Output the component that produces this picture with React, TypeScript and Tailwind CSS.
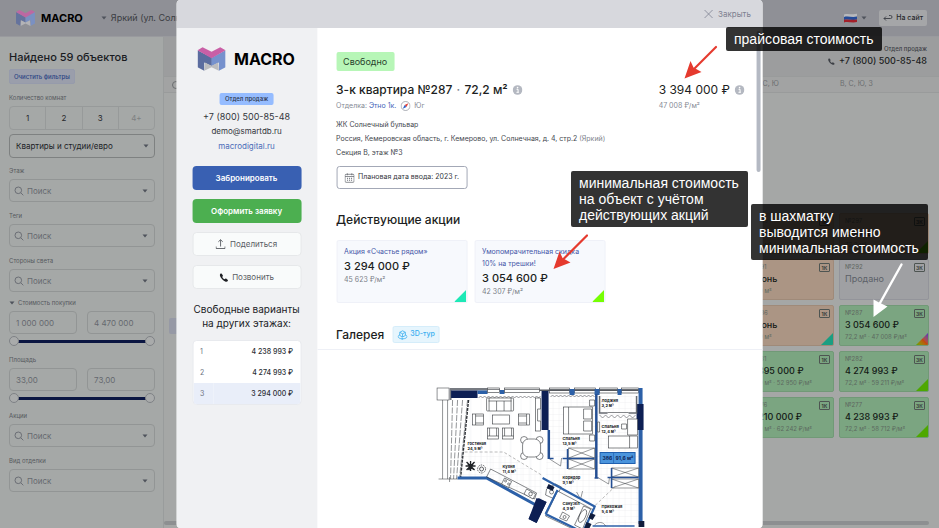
import React, { useState } from 'react';

interface Flat {
  number: string;
  rooms: string;
  price: string;
  details?: string;
  status: 'free' | 'booked' | 'sold';
  corner?: 'teal' | 'green' | 'rainbow';
}

const FLATS: Flat[] = [
  { number: '№296', rooms: '1К', price: 'Бронь', details: '38,9 м²', status: 'booked' },
  { number: '№297', rooms: '3К', price: 'Бронь', details: '72,2 м²', status: 'booked', corner: 'green' },
  { number: '№291', rooms: '1К', price: 'Бронь', details: '38,9 м²', status: 'booked' },
  { number: '№292', rooms: '3К', price: 'Продано', status: 'sold' },
  { number: '№286', rooms: '1К', price: 'Бронь', details: '38,9 м²', status: 'booked', corner: 'teal' },
  { number: '№287', rooms: '3К', price: '3 054 600 ₽', details: '72,2 м² · 47 008 ₽/м²', status: 'free', corner: 'rainbow' },
  { number: '№281', rooms: '1К', price: '3 395 000 ₽', details: '38,9 м² · 52 950 ₽/м²', status: 'free' },
  { number: '№282', rooms: '3К', price: '4 274 993 ₽', details: '72,2 м² · 59 211 ₽/м²', status: 'free', corner: 'green' },
  { number: '№276', rooms: '1К', price: '4 210 000 ₽', details: '38,9 м² · 62 242 ₽/м²', status: 'free' },
  { number: '№277', rooms: '3К', price: '4 238 993 ₽', details: '72,2 м² · 58 712 ₽/м²', status: 'free', corner: 'green' },
];

const FLOORS = [
  { floor: '1', price: '4 238 993 ₽' },
  { floor: '2', price: '4 274 993 ₽' },
  { floor: '3', price: '3 294 000 ₽' },
];

const STATUS_STYLES = {
  free: 'bg-[#7ba581] border-[#719977]',
  booked: 'bg-[#ab9584] border-[#9f8a79]',
  sold: 'bg-[#9fa0a3] border-[#93949a]',
};

const CORNER_STYLES = {
  teal: 'bg-[#1a9e82]',
  green: 'bg-[#4ea800]',
  rainbow: 'bg-linear-to-tr from-[#4ea800] via-[#c04a10] to-[#5a20c0]',
};

const Logo: React.FC<{ className: string; dim?: boolean }> = ({ className, dim }) => (
  <svg viewBox="0 0 84 71" className={className} opacity={dim ? 0.8 : 1} aria-hidden="true">
    <path d="M0 9 43 32V57L20 46V71L0 60Z" fill="#5b6c9f" />
    <path d="M84 9 42 32V57L64 46V71L84 60Z" fill="#7691cd" />
    <path d="M22 46 42 56 62 46 64 71 42 60 20 71Z" fill="#bcbcbf" />
    <path d="M15 0 42 14 68 0 84 9 42 33 0 9Z" fill="#c95fa6" />
  </svg>
);

const Caret: React.FC<{ className?: string }> = ({ className = '' }) => (
  <svg viewBox="0 0 6 4" className={`h-1 w-1.5 shrink-0 ${className}`} aria-hidden="true">
    <path d="M0.5 0.5h5L3 3.5Z" fill="#4f535c" />
  </svg>
);

const PhoneIcon: React.FC<{ className: string }> = ({ className }) => (
  <svg viewBox="0 0 16 16" className={className} fill="currentColor" aria-hidden="true">
    <path d="M1.2 1.8C2 1 3.3.7 4.1 1.7l1.6 2.2c.5.7.4 1.4-.1 2l-.9 1c.9 1.900 2.500 3.500 4.400 4.400l1-.9c.6-.5 1.300-.6 2-.1l2.200 1.600c1 .8.700 2.100-.1 2.900-.8.800-2 1-3.300.6C6.400 14 2 9.600.600 5.100.2 3.800.4 2.600 1.200 1.800Z" />
  </svg>
);

const InfoIcon: React.FC = () => (
  <svg viewBox="0 0 10 10" className="size-2.5 shrink-0" aria-hidden="true">
    <circle cx="5" cy="5" r="4.8" fill="#b4b8c1" />
    <path d="M4 4.300h1.500V7.200M3.900 7.300h2.400" stroke="#fff" strokeWidth="1" fill="none" />
    <circle cx="5" cy="2.600" r="0.8" fill="#fff" />
  </svg>
);

const SearchField: React.FC<{ id: string; label: string }> = ({ id, label }) => (
  <div>
    <label htmlFor={id} className="mb-1 block text-[6px] leading-2 text-[#55585d]">{label}</label>
    <div className="flex h-[23px] items-center rounded border border-[#929595] pr-1.5 pl-1">
      <svg viewBox="0 0 10 10" className="size-2.5 shrink-0" fill="none" stroke="#6b6e75" aria-hidden="true">
        <circle cx="4.300" cy="4.300" r="3.300" />
        <path d="m6.700 6.700 2.600 2.600" />
      </svg>
      <input
        id={id}
        placeholder="Поиск"
        className="min-w-0 flex-1 bg-transparent pl-[3px] text-[8px] text-[#44474c] outline-none placeholder:text-[#66696f]"
      />
      <Caret />
    </div>
  </div>
);

const THUMB =
  'pointer-events-none absolute inset-0 m-0 h-2.5 w-full appearance-none bg-transparent [&::-webkit-slider-thumb]:pointer-events-auto [&::-webkit-slider-thumb]:size-2.5 [&::-webkit-slider-thumb]:appearance-none [&::-webkit-slider-thumb]:rounded-full [&::-webkit-slider-thumb]:border [&::-webkit-slider-thumb]:border-[#7f8286] [&::-webkit-slider-thumb]:bg-[#a9abab]';

const RangeField: React.FC<{ label: string; from: string; to: string; caret?: boolean }> = ({ label, from, to, caret }) => {
  const [low, setLow] = useState(0);
  const [high, setHigh] = useState(100);

  return (
    <fieldset>
      <legend className="mb-1 flex items-center gap-1 text-[6px] leading-2 text-[#55585d]">
        {caret && <Caret className="-mr-px" />}
        {label}
      </legend>
      <div className="mb-0.5 grid grid-cols-2 gap-2.5">
        <input
          aria-label={`${label} от`}
          defaultValue={from}
          className="h-[23px] min-w-0 rounded border border-[#929595] bg-transparent px-1.5 text-[8px] text-[#66696f]"
        />
        <input
          aria-label={`${label} до`}
          defaultValue={to}
          className="h-[23px] min-w-0 rounded border border-[#929595] bg-transparent px-1.5 text-[8px] text-[#66696f]"
        />
      </div>
      <div className="relative flex h-2.5 items-center px-1">
        <div className="h-[3px] w-full bg-[#0b1642]" />
        <input type="range" aria-label={`${label}, минимум`} value={low} onChange={(e) => setLow(Number(e.target.value))} className={THUMB} />
        <input type="range" aria-label={`${label}, максимум`} value={high} onChange={(e) => setHigh(Number(e.target.value))} className={THUMB} />
      </div>
    </fieldset>
  );
};

const TopBar: React.FC = () => (
  <header className="flex h-[37px] shrink-0 items-center justify-between border-b border-[#999a9e] bg-[#8f9096] pr-3 pl-4">
    <div className="flex items-center">
      <Logo className="h-4 w-[19px]" dim />
      <span className="ml-1.5 text-[11px] font-bold text-black">MACRO</span>
      <button className="ml-[18px] flex items-center gap-1 text-[9px] whitespace-nowrap text-[#3b3d42]">
        <Caret />
        Яркий (ул. Солнечная)
      </button>
    </div>
    <div className="flex items-center">
      <button aria-label="Язык" className="flex items-center gap-1">
        <svg viewBox="0 0 13 10" className="h-2.5 w-[13px]" aria-hidden="true">
          <path d="M0 1.500C4 0 8 2 13 .8V3.800C8 5 4 3 0 4.200Z" fill="#b8b9bc" />
          <path d="M0 4C4 2.800 8 4.800 13 3.600V6.600C8 7.800 4 5.800 0 7Z" fill="#234a98" />
          <path d="M0 6.800C4 5.600 8 7.600 13 6.400V9C8 10.200 4 8.200 0 9.400Z" fill="#a3202a" />
        </svg>
        <Caret />
      </button>
      <a href="#site" className="ml-3 flex h-4 items-center gap-[3px] rounded-xs bg-[#a5a6a8] px-1 text-[7px] font-medium whitespace-nowrap text-[#26282c]">
        <svg viewBox="0 0 10 8" className="h-2 w-2.5" fill="none" stroke="#3a3d44" strokeWidth="0.900" aria-hidden="true">
          <path d="M3 2.500 1 4.500l2 2M1 4.500h6.500a1.500 1.500 0 0 0 0-3H6" />
        </svg>
        На сайт
      </a>
    </div>
  </header>
);

const Filters: React.FC = () => (
  <aside className="w-[164px] shrink-0 border-r border-[#999c9c] bg-[#a5a8a7] pt-[13px] pr-2 pl-[9px]">
    <h2 className="text-[11px] leading-[15px] font-medium whitespace-nowrap text-[#191b1f]">Найдено 59 объектов</h2>
    <button className="mt-1 flex h-[15px] items-center rounded-xs border border-[#969bab] bg-[#9a9eab] px-1 text-[6px] font-medium whitespace-nowrap text-[#2c4484]">
      Очистить фильтры
    </button>
    <p className="mt-2.5 text-[6px] leading-2 text-[#55585d]">Количество комнат</p>
    <div className="mt-1 flex h-6 divide-x divide-[#979a9a] rounded border border-[#979a9a] text-[8px] text-[#25272b]">
      <button className="flex-1">1</button>
      <button className="flex-1">2</button>
      <button className="flex-1">3</button>
      <button className="flex-1 text-[#7d8082]">4+</button>
    </div>
    <div className="relative mt-1">
      <select
        aria-label="Тип помещения"
        className="block h-6 w-full appearance-none rounded border border-[#7e8181] bg-transparent pl-1.5 text-[8px] text-[#202226]"
      >
        <option>Квартиры и студии/евро</option>
      </select>
      <Caret className="pointer-events-none absolute top-2.5 right-1.5" />
    </div>
    <div className="mt-[9px] flex flex-col gap-2.5">
      <SearchField id="floor" label="Этаж" />
      <SearchField id="tags" label="Теги" />
      <SearchField id="sides" label="Стороны света" />
    </div>
    <div className="mt-[7px] flex flex-col gap-2.5">
      <RangeField label="Стоимость покупки" from="1 000 000" to="4 470 000" caret />
      <RangeField label="Площадь" from="33,00" to="73,00" />
    </div>
    <div className="mt-[9px] flex flex-col gap-2.5">
      <SearchField id="promo" label="Акции" />
      <SearchField id="finish" label="Вид отделки" />
    </div>
  </aside>
);

const FlatCard: React.FC<{ flat: Flat }> = ({ flat }) => (
  <a
    href={`#${flat.number}`}
    className={`relative block h-[41px] overflow-hidden rounded-xs border px-[5px] pt-[3px] whitespace-nowrap ${STATUS_STYLES[flat.status]}`}
  >
    <span className="flex h-2 justify-between text-[6px] leading-2 text-[#5e655f]">
      {flat.number}
      <span className="-mr-0.5 flex h-[9px] w-[11px] items-center justify-center rounded-[1px] border border-[#4e5552] text-[5px] font-bold text-[#3a403d]">
        {flat.rooms}
      </span>
    </span>
    <span className={`mt-0.5 block text-[9px] leading-3 ${flat.status === 'sold' ? 'text-[#5c6068]' : 'font-medium text-[#141a16]'}`}>
      {flat.price}
    </span>
    <span className="mt-0.5 block text-[6px] leading-2 text-[#5b6a60]">{flat.details}</span>
    {flat.corner && (
      <span className={`absolute right-0 bottom-0 size-3 [clip-path:polygon(100%_0,100%_100%,0_100%)] ${CORNER_STYLES[flat.corner]}`} />
    )}
  </a>
);

const Board: React.FC = () => (
  <main className="flex min-w-0 flex-1 flex-col bg-[#a5a7a6]">
    <div className="flex h-[39px] shrink-0 justify-end bg-[#9c9d9e] pt-[7px] pr-3">
      <div className="text-right">
        <p className="text-[6px] leading-[10px] font-medium text-[#3d4046]">Отдел продаж</p>
        <a href="tel:+78005008548" className="flex items-center gap-1 text-[9px] leading-[14px] font-medium text-[#1c1e22]">
          <PhoneIcon className="size-[7px] text-[#3d4046]" />
          +7 (800) 500-85-48
        </a>
      </div>
    </div>
    <div className="flex h-[17px] shrink-0 items-center justify-between border-y border-[#999b9b] bg-[#a2a3a3] pr-2.5 text-[7px] text-[#6b6e70]">
      <span className="ml-2 size-2 rounded-full border border-[#6b6e70]" />
      <div className="grid grid-cols-[90px_90px] gap-[5px]">
        <span className="pl-2.5">В, С, Ю</span>
        <span className="pl-px">В, С, Ю, З</span>
      </div>
    </div>
    <div className="flex items-center justify-between pt-[120px] pr-2.5">
      <span className="ml-[5px] h-4 w-6 rounded-xs bg-[#9699a5]" />
      <div className="grid grid-cols-[90px_90px] gap-[5px]">
        {FLATS.map((flat) => (
          <FlatCard key={flat.number} flat={flat} />
        ))}
      </div>
    </div>
    <div className="mt-auto mr-2.5 mb-[3px] h-1 shrink-0 rounded-full bg-[#8d8f91]" />
  </main>
);

const ContactPanel: React.FC = () => (
  <aside className="w-[141px] shrink-0 bg-[#f0f1f3] px-4 pt-[19px] text-center">
    <div className="flex items-center gap-[9px] pl-[5px]">
      <Logo className="h-6 w-7 shrink-0" />
      <span className="text-base leading-6 font-bold text-black">MACRO</span>
    </div>
    <p className="mx-auto mt-[22px] w-fit rounded-xs bg-[#95bcff] px-[5px] text-[6px] leading-3 font-medium text-[#2b3448]">Отдел продаж</p>
    <div className="mt-1 flex flex-col text-[8px] leading-[15px] text-[#33363c]">
      <a href="tel:+78005008548" className="text-[9px]">+7 (800) 500-85-48</a>
      <a href="mailto:demo@smartdb.ru">demo@smartdb.ru</a>
      <a href="#macrodigital" className="text-[#4a6cb8]">macrodigital.ru</a>
    </div>
    <div className="mt-3 flex flex-col gap-[9px] text-[8px]">
      <button className="h-6 rounded bg-[#3960b2] font-semibold text-white">Забронировать</button>
      <button className="h-6 rounded bg-[#4caf50] font-semibold text-white">Оформить заявку</button>
      <button className="flex h-6 items-center justify-center gap-1 rounded border border-[#e6e8ea] bg-[#f9fbfb] text-[#5a5d63]">
        <svg viewBox="0 0 10 10" className="size-2.5" fill="none" stroke="#5a5d63" strokeWidth="0.900" aria-hidden="true">
          <path d="M5 7.500V.8M2.800 2.800 5 .7l2.200 2.100M.5 7.500v2h9v-2" />
        </svg>
        Поделиться
      </button>
      <button className="flex h-6 items-center justify-center gap-1 rounded border border-[#e6e8ea] bg-[#f9fbfb] text-[#5a5d63]">
        <PhoneIcon className="size-[9px] text-[#1f2125]" />
        Позвонить
      </button>
    </div>
    <h3 className="-mx-1 mt-[13px] text-[10px] leading-[14px] text-[#202226]">
      Свободные варианты
      <br />
      на других этажах:
    </h3>
    <div className="mt-2.5 overflow-hidden rounded border border-[#e8eaee] bg-white">
      <table className="w-full text-[7px] leading-[21px] text-[#2c2f35]">
        <tbody>
          {FLOORS.map(({ floor, price }) => (
            <tr key={floor} className="last:bg-[#e9eef9]">
              <td className="pl-[7px] text-left text-[#6d7280]">{floor}</td>
              <td className="pr-[7px] text-right font-medium">{price}</td>
            </tr>
          ))}
        </tbody>
      </table>
    </div>
  </aside>
);

const PromoCard: React.FC<{ title: string; price: string; perMeter: string; corner: string }> = ({ title, price, perMeter, corner }) => (
  <article className="relative h-[63px] w-[131px] overflow-hidden rounded-xs border border-[#eff1f8] bg-[#f7f9fd] pt-[5px] pr-4 pl-[7px]">
    <h3 className="text-[7px] leading-3 text-[#4456a8]">{title}</h3>
    <p className="text-[11px] leading-4 font-medium text-[#1c1e22]">{price}</p>
    <p className="text-[7px] leading-3 text-[#7b7f88]">{perMeter}</p>
    <span className={`absolute right-0 bottom-0 size-3 [clip-path:polygon(100%_0,100%_100%,0_100%)] ${corner}`} />
  </article>
);

const ROOMS = [
  { x: 467, y: 445, name: 'Гостиная', area: '24,5 м²' },
  { x: 502, y: 468, name: 'Кухня', area: '11,4 м²' },
  { x: 562, y: 440, name: 'Спальня', area: '13,5 м²' },
  { x: 562, y: 479, name: 'Коридор', area: '9,1 м²' },
  { x: 562, y: 505, name: 'Санузел', area: '4,9 м²' },
  { x: 601, y: 402, name: 'Лоджия', area: '3,2 м²' },
  { x: 601, y: 428, name: 'Спальня', area: '12,4 м²' },
  { x: 601, y: 508, name: 'Прихожая', area: '5,4 м²' },
];

const FloorPlan: React.FC = () => (
  <svg viewBox="435 387 209 150" className="mx-auto h-[150px] w-[209px]" role="img" aria-label="Планировка квартиры">
    <defs>
      <pattern id="tiles" width="6" height="6" patternUnits="userSpaceOnUse">
        <path d="M0 0H6M0 0V6" stroke="#e2e5e9" strokeWidth="0.500" />
      </pattern>
      <pattern id="boards" width="40" height="3" patternUnits="userSpaceOnUse">
        <path d="M0 0V3M10 0V3M20 0V3M30 0V3" stroke="#e8eaee" strokeWidth="0.500" />
      </pattern>
    </defs>
    <path d="M465 398H541V500L486 477H458Z" fill="url(#boards)" />
    <path d="M464 452H503L541 475V505L486 477H458Z" fill="url(#tiles)" />
    <path d="M549 395H638V535H590L545 478Z" fill="url(#tiles)" />

    {/* balcony */}
    <g fill="none" stroke="#4a4d52" strokeWidth="0.600">
      <rect x="436.500" y="388" width="12" height="12" fill="#fff" />
      <path d="M442 400V479M447 400V479M438 479H457M449 477V482" />
      <path d="M452 400 450 479M457 400 453 479M462 400 456 479M467 400 459 478" strokeDasharray="6 1.500" />
      <path d="M468 400 460 478" stroke="#303338" strokeWidth="1.400" strokeDasharray="3 1" />
    </g>

    {/* outer walls */}
    <path d="M449 388H487V390.500H451V400H449Z" fill="#777b82" />
    <path d="M450.500 390.500H477V398H450.500Z" fill="#0d1f54" />
    <path d="M477 390.500h10v3.500h-10ZM499 390h5v4h-5Z" fill="#2c60a8" />
    <g fill="#fff" stroke="#33363b" strokeWidth="0.600">
      <rect x="487" y="388" width="12" height="4.500" />
      <rect x="504" y="388" width="35" height="4.500" />
      <rect x="549" y="388" width="20" height="5" />
      <rect x="574" y="388" width="21" height="5" />
      <rect x="599" y="388" width="18" height="5" />
      <rect x="621" y="388" width="17" height="5" />
      <path d="M487 389.500h12M504 389.500h35M549 389.500h20M574 389.500h21M599 389.500h18M621 389.500h17" />
    </g>
    <path d="M539 389.500H638V391H539Z" fill="#55585e" />
    <path d="M569 389h5v6h-5ZM594 389h5v6h-5ZM617 389h4v6h-4Z" fill="#2c60a8" />
    <path d="M541 391H548V430H541Z" fill="#0d1f54" />
    <path d="M638 388H642V524H638Z" fill="#2c60a8" />
    <path d="M636 404H643V430H636Z" fill="#0d1f54" />
    <path d="M547 430V459H549.500V430ZM594.500 394V478H597V394Z" fill="#244f94" />
    <path d="M457 478H486L539 507" fill="none" stroke="#2c60a8" strokeWidth="3" />
    <path d="M538 498 546 502 536 523 528 519Z" fill="#0d1f54" />

    {/* curtains */}
    <g fill="none" stroke="#55585e" strokeWidth="0.600">
      <path d="m478 398 2-2 2 2 2-2 2 2 2-2 2 2 2-2 2 2 2-2 2 2 2-2 2 2 2-2 2 2 2-2 2 2 2-2 2 2 2-2 2 2 2-2 2 2 2-2 2 2 2-2 2 2 2-2 2 2 2-2 2 2 2-2" />
      <path d="m550 397 2-2 2 2 2-2 2 2 2-2 2 2 2-2 2 2 2-2 2 2 2-2 2 2 2-2 2 2 2-2 2 2 2-2 2 2 2-2 2 2 2-2 2 2" />
      <path d="m599 415 3 3 3-3 3 3 3-3 3 3 3-3 3 3 3-3 3 3 3-3 3 3 3-3" />
    </g>

    {/* furniture */}
    <g fill="#fff" stroke="#33363b" strokeWidth="0.600">
      <rect x="486" y="398" width="27" height="13" rx="1" />
      <path d="M488.500 398V411M496 401V411M503.500 401V411M510.500 398V411M488 401H511" />
      <rect x="472" y="414" width="11" height="11" />
      <path d="M475 416h8M475 423h8M475 414V425" />
      <rect x="492" y="415" width="17" height="9" />
      <rect x="518" y="414" width="11" height="11" />
      <path d="M518 416h8M518 423h8M526 414V425" />
      <rect x="487" y="428" width="11" height="11" />
      <path d="M489 428V436M496 428V436M487 436h11" />
      <rect x="502" y="428" width="11" height="11" />
      <path d="M504 428V436M511 428V436M502 436h11" />
      <circle cx="523.500" cy="440" r="3.500" />
      <circle cx="539" cy="440" r="3.500" />
      <circle cx="523.500" cy="456" r="3.500" />
      <circle cx="539" cy="456" r="3.500" />
      <rect x="522" y="439" width="18" height="18" rx="6" />
      <rect x="535" y="398" width="5" height="33" />
      <path d="M540 409H537V421H540" />
      <rect x="563" y="407" width="29" height="27" />
      <path d="M568 407V434M583 409h8v10h-8ZM583 421h8v10h-8ZM589 400h5v6h-5ZM589 435h5v6h-5Z" />
      <path d="M599 396V413H607M628 413H636V396" fill="none" stroke="#666a70" strokeWidth="1.500" />
      <path d="M607 412.500H628" fill="none" />
      <rect x="608" y="436" width="29" height="12" />
      <path d="M629 436V448M627 419h10v16h-10ZM621 424h5v5h-5ZM597 422h2v10h-2Z" />
      <path d="M486 477 490 469 536 493 534 499Z" fill="none" />
      <path d="m504 478 7 3.500-3 6-7-3.500Z" />
      <circle cx="505" cy="481" r="1" />
      <circle cx="508" cy="484" r="1" />
      <path d="m526 489 9 5-2.500 5-9-5Z" />
      <circle cx="530" cy="494" r="1.800" />
    </g>
    <g stroke="#1f2226" strokeWidth="0.700">
      <path d="m466 462 8 8M474 462l-8 8M470 461v10M465 466h10M467 463.500l6 6M468 470l5-7" strokeWidth="1.300" />
      <circle cx="481" cy="469" r="4" fill="none" strokeDasharray="1.500 1" />
      <circle cx="481" cy="469" r="2" fill="none" />
    </g>

    {/* wardrobes and doors */}
    <g fill="#fff" stroke="#33363b" strokeWidth="0.500">
      <path d="M568 448h26v10h-26ZM568 448l26 10M594 448l-26 10" />
      <path d="M568 459h26v10h-26ZM568 459l26 10M594 459l-26 10" />
      <path d="M611 468h27v9h-27ZM611 468l27 9M638 468l-27 9" />
      <path d="M611 479h27v9h-27ZM611 479l27 9M638 479l-27 9" />
      <path d="M549 459 560 466 561 458M598 478 608 484 609 477M576 492 580 499 582 491" fill="none" />
      <path d="M464 452H503L541 475M615 486 594 506" fill="none" stroke="#777" strokeDasharray="3 2" />
    </g>
    <path d="M549 458.500h4M562 458.500h32M567 449V469M594 478h4M607 477.500h31M611 468V488" stroke="#244f94" strokeWidth="1.600" />

    {/* bathroom */}
    <g fill="none" stroke="#33363b" strokeWidth="0.600">
      <path d="m546 489 9-5 6 3-7 12-9-4Z" fill="#fff" />
      <path d="m557 491 36 19-12 23-36-17Z" fill="#fff" />
      <path d="m583 506 7 3-8 20-8-4Z" fill="#fff" />
      <ellipse cx="582" cy="516" rx="3" ry="7" transform="rotate(26 582 516)" />
      <path d="m562 512 7 4-3 5-7-3Z" fill="#fff" />
      <circle cx="564" cy="517" r="1.500" />
      <circle cx="551" cy="492" r="2" />
    </g>
    <path d="M542 478 562 489 595 507M557 490 545 514M594 507 582 533M545 514 584 533" fill="none" stroke="#2c60a8" strokeWidth="2.200" />
    <path d="M536 498 546 502 536 523 528 519Z" fill="#0d1f54" />
    <path d="m548 484 6 3-2 4-6-3ZM590 513l5 2-3 5-4-2ZM586 522l5 2-3 6-4-2ZM638 521h6v6h-6Z" fill="#101c3c" />
    <path d="M592 526 634 526" stroke="#2c60a8" strokeWidth="1.500" />
    <path d="M594 525c4-4 9-3 11 1" fill="none" stroke="#33363b" strokeWidth="0.500" />

    {ROOMS.map((room) => (
      <text key={`${room.x}-${room.y}`} x={room.x} y={room.y} fontSize="4" fontWeight="700" fill="#15171a">
        {room.name}
        <tspan x={room.x} dy="5">{room.area}</tspan>
      </text>
    ))}

    <rect x="599.500" y="452.500" width="35" height="11" fill="#4a94dc" stroke="#1f5fae" />
    <path d="M613 453V463" stroke="#1f5fae" strokeWidth="0.700" />
    <text x="602" y="460" fontSize="5" fontWeight="700" fill="#0d1f54">386</text>
    <text x="615" y="460" fontSize="5" fontWeight="700" fill="#0d1f54">91,6 м²</text>
  </svg>
);

const FlatDetails: React.FC = () => (
  <div className="min-w-0 flex-1 bg-white pt-6 whitespace-nowrap">
    <div className="pl-[19px]">
      <p className="w-fit rounded-xs bg-[#b7f6b7] px-[7px] text-[9px] leading-[19px] text-[#27412c]">Свободно</p>
      <div className="mt-[9px] flex items-start justify-between pr-[18px] text-[#1c1e22]">
        <div>
          <h1 className="flex items-center gap-[5px] text-xs leading-5 font-medium">
            <span>
              3-к квартира №287 <span className="mx-px text-[#7d8190]">·</span> 72,2 м²
            </span>
            <InfoIcon />
          </h1>
          <p className="flex items-center gap-1 text-[7px] leading-3 text-[#868a95]">
            <span>
              Отделка: <a href="#finish" className="text-[#3f63b8]">Этно 1к.</a>
            </span>
            <svg viewBox="0 0 10 10" className="size-2.5" aria-hidden="true">
              <circle cx="5" cy="5" r="4.500" fill="#fff" stroke="#777c88" strokeWidth="0.600" />
              <path d="M7.800 2.200 5.900 5.900 4.100 4.100Z" fill="#e33b30" />
              <path d="M2.200 7.800 4.100 4.100 5.900 5.900Z" fill="#2f62c9" />
            </svg>
            Юг
          </p>
        </div>
        <div>
          <p className="flex items-center gap-[5px] text-xs leading-5">
            3 394 000 ₽
            <InfoIcon />
          </p>
          <p className="text-[7px] leading-3 text-[#868a95]">47 008 ₽/м²</p>
        </div>
      </div>
      <address className="mt-1.5 text-[7px] leading-[14px] text-[#44474e] not-italic">
        ЖК Солнечный бульвар
        <br />
        Россия, Кемеровская область, г. Кемерово, ул. Солнечная, д. 4, стр.2 <span className="text-[#7e828c]">(Яркий)</span>
        <br />
        Секция В, этаж №3
      </address>
      <button className="mt-1.5 flex h-[23px] items-center gap-1 rounded-[3px] border border-[#a3a8b6] px-[7px] text-[7px] text-[#33363c]">
        <svg viewBox="0 0 10 10" className="size-2.5" fill="none" stroke="#5a5e66" strokeWidth="0.700" aria-hidden="true">
          <rect x="0.500" y="1.300" width="9" height="8" rx="1" />
          <path d="M.5 3.500h9M2.800.3v2M7.200.3v2" />
          <path d="M2.500 5.300h5M2.500 7.200h5" strokeDasharray="1 1" strokeWidth="1" />
        </svg>
        Плановая дата ввода: 2023 г.
      </button>
      <h2 className="mt-[23px] text-xs leading-4 font-medium text-[#1c1e22]">Действующие акции</h2>
      <div className="mt-3 flex gap-[7px] whitespace-normal">
        <PromoCard title="Акция «Счастье рядом»" price="3 294 000 ₽" perMeter="45 623 ₽/м²" corner="bg-[#1de9b6]" />
        <PromoCard title="Умопомрачительная скидка 10% на трешки!" price="3 054 600 ₽" perMeter="42 307 ₽/м²" corner="bg-[#76ff03]" />
      </div>
      <div className="mt-[23px] flex items-center gap-2">
        <h2 className="text-xs leading-4 font-medium text-[#1c1e22]">Галерея</h2>
        <button className="flex h-[17px] items-center gap-[3px] rounded-xs border border-[#d5edfa] bg-[#e6f5fd] px-1 text-[7px] font-medium text-[#38aef0]">
          <svg viewBox="0 0 10 10" className="size-2.5" fill="none" stroke="#38aef0" strokeWidth="0.800" aria-hidden="true">
            <path d="M5 .8 7.800 2.300V5.500L5 7 2.200 5.500V2.300ZM2.200 2.300 5 3.800l2.800-1.500M5 3.800V7" />
            <path d="M2.200 4.800C-.8 6.200.3 8.600 5 8.900c4.700-.3 5.800-2.700 2.800-4.100M4 8l1.200.9L4 9.800" />
          </svg>
          3D-тур
        </button>
      </div>
    </div>
    <div className="mt-1.5 mb-[37px] border-t border-[#eef0f6]" />
    <FloorPlan />
  </div>
);

const FlatDialog: React.FC = () => (
  <div role="dialog" aria-label="Квартира №287" className="absolute inset-y-0 left-1/2 flex w-5/8 -translate-x-1/2 flex-col overflow-hidden rounded bg-white">
    <div className="flex h-7 shrink-0 items-center justify-end bg-[#d7d8dd] pr-3">
      <button className="flex items-center gap-1 text-[8px] text-[#7d8190]">
        <svg viewBox="0 0 10 10" className="size-2.5" fill="none" stroke="#7d8190" strokeWidth="0.800" aria-hidden="true">
          <path d="m1 1 8 8M9 1 1 9" />
        </svg>
        Закрыть
      </button>
    </div>
    <div className="relative flex min-h-0 flex-1">
      <ContactPanel />
      <FlatDetails />
      <div className="absolute top-[3px] right-0.5 h-[141px] w-1 rounded-full bg-[#b4b9c3]" />
    </div>
  </div>
);

const Note: React.FC<{ className: string; children: React.ReactNode }> = ({ className, children }) => (
  <p className={`absolute rounded-xs bg-black/80 py-1 pr-[9px] pl-2 font-['Liberation_Sans',Arial,sans-serif] text-sm leading-4 whitespace-nowrap text-white ${className}`}>
    {children}
  </p>
);

const Notes: React.FC = () => (
  <div className="pointer-events-none absolute inset-0">
    <Note className="top-[27px] left-[726px]">прайсовая стоимость</Note>
    <Note className="top-[171px] left-[571px]">
      минимальная стоимость
      <br />
      на объект с учётом
      <br />
      действующих акций
    </Note>
    <Note className="top-[204px] left-[751px]">
      в шахматку
      <br />
      выводится именно
      <br />
      минимальная стоимость
    </Note>
    <svg viewBox="0 0 36 36" className="absolute top-[44px] left-[683px] size-9" aria-hidden="true">
      <path d="M33 3 12 24" stroke="#e53a2e" strokeWidth="2.200" strokeLinecap="round" />
      <path d="M1.500 34.500 7.500 17 10.500 23.500 18.500 28Z" fill="#e53a2e" />
    </svg>
    <svg viewBox="0 0 36 36" className="absolute top-[234px] left-[552px] size-9" aria-hidden="true">
      <path d="M35 1.500 12 24.500" stroke="#e53a2e" strokeWidth="2.200" strokeLinecap="round" />
      <path d="M1.500 35 7.500 17.500 10.500 24 18.500 28.500Z" fill="#e53a2e" />
    </svg>
    <svg viewBox="0 0 34 58" className="absolute top-[261px] left-[870px] h-[58px] w-[34px]" aria-hidden="true">
      <path d="M31.500 3.500 10 42" stroke="#fff" strokeWidth="2.400" strokeLinecap="round" />
      <path d="M3.500 56 3.500 38.500 9 41.500 17.500 45.500Z" fill="#fff" />
    </svg>
  </div>
);

const App: React.FC = () => {
  return (
    <div className="relative flex h-screen flex-col overflow-hidden bg-[#a5a7a6] font-[Inter,'Noto_Sans',sans-serif]">
      <TopBar />
      <div className="flex min-h-0 flex-1">
        <Filters />
        <Board />
      </div>
      <FlatDialog />
      <Notes />
    </div>
  );
};

export default App;
